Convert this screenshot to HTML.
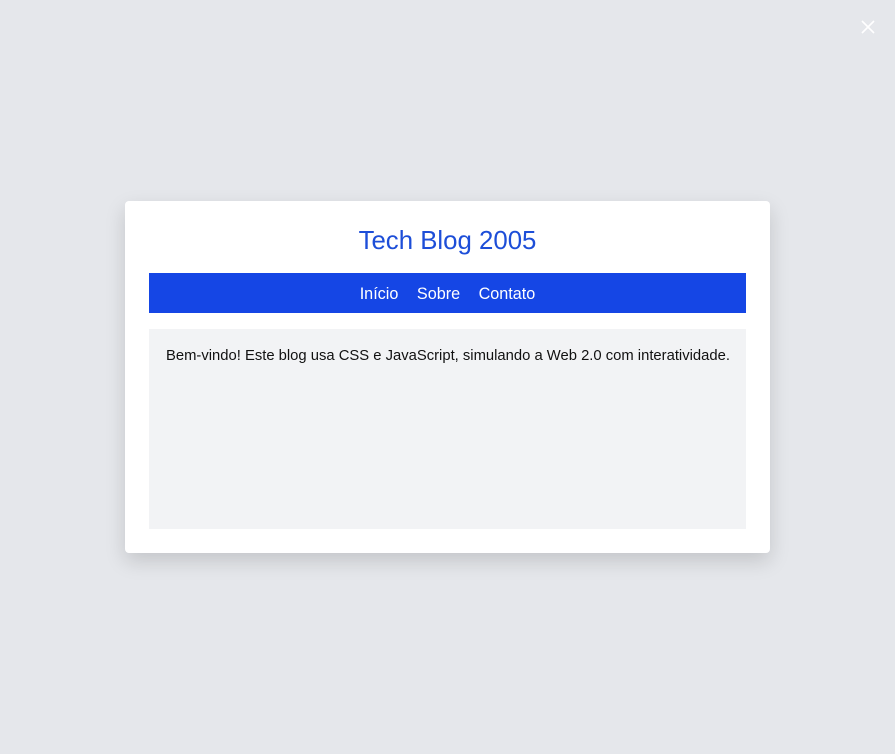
<!DOCTYPE html>
<html><head><style>
html,body{margin:0;padding:0;}
body{width:895px;height:754px;background:#e5e7eb;position:relative;overflow:hidden;font-family:"Liberation Sans",sans-serif;}
.card{position:absolute;left:125px;top:201px;width:645px;height:352px;background:#fff;border-radius:4px;box-shadow:0 8px 20px rgba(0,0,0,0.15);}
h1{position:absolute;left:0;right:0;top:25px;margin:0;text-align:center;font-weight:normal;font-size:25.8px;color:#1d4ed8;line-height:30px;}
.nav{position:absolute;left:24px;top:72px;width:597px;height:40px;background:#1546e5;text-align:center;color:#fff;font-size:16.2px;line-height:43px;}
.nav span{margin:0 7px;}
.content{position:absolute;left:24px;top:128px;width:597px;height:200px;background:#f2f3f5;}
.content p{margin:0;position:absolute;left:17px;top:19px;font-size:14.8px;color:#111;white-space:nowrap;}
.x{position:absolute;left:860px;top:19px;}
</style></head><body>
<svg class="x" width="16" height="16" viewBox="0 0 16 16"><path d="M2 2L14 14M14 2L2 14" stroke="#fff" stroke-width="1.6"/></svg>
<div class="card">
<h1>Tech Blog 2005</h1>
<div class="nav"><span>Início</span> <span>Sobre</span> <span>Contato</span></div>
<div class="content"><p>Bem-vindo! Este blog usa CSS e JavaScript, simulando a Web 2.0 com interatividade.</p></div>
</div>
</body></html>
